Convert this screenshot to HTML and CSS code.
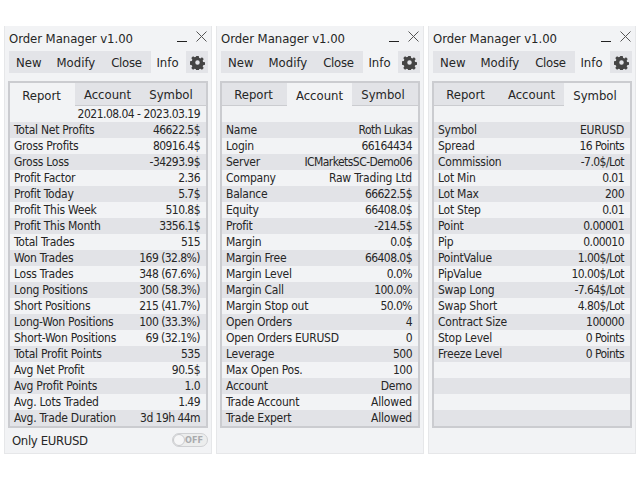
FILE: index.html
```html
<!DOCTYPE html>
<html lang="en">
<head>
<meta charset="utf-8">
<title>Order Manager</title>
<link rel="stylesheet" href="styles.css">
</head>
<body>
<main class="desk">

<section class="panel">
  <header class="title"><span>Order Manager v1.00</span><span class="min"></span><svg class="x" width="11" height="11" viewBox="0 0 11 11"><path d="M.5.5L10.5 10.5M10.5.5L.5 10.5"/></svg></header>
  <nav class="toolbar">
    <div class="btns"><span class="b1">New</span><span class="b2">Modify</span><span class="b3">Close</span></div>
    <span class="info">Info</span>
    <span class="gear"><svg width="15" height="15" viewBox="0 0 16 16"><path fill-rule="evenodd" d="M6.7 1h2.6l.4 2 1.3.6 1.8-1.1 1.8 1.8-1.1 1.8.6 1.3 2 .4v2.6l-2 .4-.6 1.3 1.1 1.8-1.8 1.8-1.8-1.1-1.3.6-.4 2H6.7l-.4-2-1.3-.6-1.8 1.1-1.8-1.8 1.1-1.8-.6-1.3-2-.4V6.7l2-.4.6-1.3-1.1-1.8 1.8-1.8 1.8 1.1 1.3-.6zM8 5.6a2.4 2.4 0 1 0 0 4.8 2.4 2.4 0 0 0 0-4.8z"/></svg></span>
  </nav>
  <div class="box">
    <div class="tabs"><span class="tab on t1">Report</span><span class="tab t2">Account</span><span class="tab t3">Symbol</span></div>
    <div class="date">2021.08.04 - 2023.03.19</div>
    <div class="rows">
      <div class="row"><span>Total Net Profits</span><span>46622.5$</span></div>
      <div class="row"><span>Gross Profits</span><span>80916.4$</span></div>
      <div class="row"><span>Gross Loss</span><span>-34293.9$</span></div>
      <div class="row"><span>Profit Factor</span><span>2.36</span></div>
      <div class="row"><span>Profit Today</span><span>5.7$</span></div>
      <div class="row"><span>Profit This Week</span><span>510.8$</span></div>
      <div class="row"><span>Profit This Month</span><span>3356.1$</span></div>
      <div class="row"><span>Total Trades</span><span>515</span></div>
      <div class="row"><span>Won Trades</span><span>169 (32.8%)</span></div>
      <div class="row"><span>Loss Trades</span><span>348 (67.6%)</span></div>
      <div class="row"><span>Long Positions</span><span>300 (58.3%)</span></div>
      <div class="row"><span>Short Positions</span><span>215 (41.7%)</span></div>
      <div class="row"><span>Long-Won Positions</span><span>100 (33.3%)</span></div>
      <div class="row"><span>Short-Won Positions</span><span>69 (32.1%)</span></div>
      <div class="row"><span>Total Profit Points</span><span>535</span></div>
      <div class="row"><span>Avg Net Profit</span><span>90.5$</span></div>
      <div class="row"><span>Avg Profit Points</span><span>1.0</span></div>
      <div class="row"><span>Avg. Lots Traded</span><span>1.49</span></div>
      <div class="row"><span>Avg. Trade Duration</span><span>3d 19h 44m</span></div>
    </div>
  </div>
  <footer class="foot"><span>Only EURUSD</span><span class="toggle"><i class="knob"></i><b class="off">OFF</b></span></footer>
</section>

<section class="panel">
  <header class="title"><span>Order Manager v1.00</span><span class="min"></span><svg class="x" width="11" height="11" viewBox="0 0 11 11"><path d="M.5.5L10.5 10.5M10.5.5L.5 10.5"/></svg></header>
  <nav class="toolbar">
    <div class="btns"><span class="b1">New</span><span class="b2">Modify</span><span class="b3">Close</span></div>
    <span class="info">Info</span>
    <span class="gear"><svg width="15" height="15" viewBox="0 0 16 16"><path fill-rule="evenodd" d="M6.7 1h2.6l.4 2 1.3.6 1.8-1.1 1.8 1.8-1.1 1.8.6 1.3 2 .4v2.6l-2 .4-.6 1.3 1.1 1.8-1.8 1.8-1.8-1.1-1.3.6-.4 2H6.7l-.4-2-1.3-.6-1.8 1.1-1.8-1.8 1.1-1.8-.6-1.3-2-.4V6.7l2-.4.6-1.3-1.1-1.8 1.8-1.8 1.8 1.1 1.3-.6zM8 5.6a2.4 2.4 0 1 0 0 4.8 2.4 2.4 0 0 0 0-4.8z"/></svg></span>
  </nav>
  <div class="box">
    <div class="tabs"><span class="tab t1">Report</span><span class="tab on t2">Account</span><span class="tab t3">Symbol</span></div>
    <div class="date"></div>
    <div class="rows">
      <div class="row"><span>Name</span><span>Roth Lukas</span></div>
      <div class="row"><span>Login</span><span>66164434</span></div>
      <div class="row"><span>Server</span><span>ICMarketsSC-Demo06</span></div>
      <div class="row"><span>Company</span><span class="word">Raw Trading Ltd</span></div>
      <div class="row"><span>Balance</span><span>66622.5$</span></div>
      <div class="row"><span>Equity</span><span>66408.0$</span></div>
      <div class="row"><span>Profit</span><span>-214.5$</span></div>
      <div class="row"><span>Margin</span><span>0.0$</span></div>
      <div class="row"><span>Margin Free</span><span>66408.0$</span></div>
      <div class="row"><span>Margin Level</span><span>0.0%</span></div>
      <div class="row"><span>Margin Call</span><span>100.0%</span></div>
      <div class="row"><span>Margin Stop out</span><span>50.0%</span></div>
      <div class="row"><span>Open Orders</span><span>4</span></div>
      <div class="row"><span>Open Orders EURUSD</span><span>0</span></div>
      <div class="row"><span>Leverage</span><span>500</span></div>
      <div class="row"><span>Max Open Pos.</span><span>100</span></div>
      <div class="row"><span>Account</span><span class="word">Demo</span></div>
      <div class="row"><span>Trade Account</span><span class="word">Allowed</span></div>
      <div class="row"><span>Trade Expert</span><span class="word">Allowed</span></div>
    </div>
  </div>
</section>

<section class="panel">
  <header class="title"><span>Order Manager v1.00</span><span class="min"></span><svg class="x" width="11" height="11" viewBox="0 0 11 11"><path d="M.5.5L10.5 10.5M10.5.5L.5 10.5"/></svg></header>
  <nav class="toolbar">
    <div class="btns"><span class="b1">New</span><span class="b2">Modify</span><span class="b3">Close</span></div>
    <span class="info">Info</span>
    <span class="gear"><svg width="15" height="15" viewBox="0 0 16 16"><path fill-rule="evenodd" d="M6.7 1h2.6l.4 2 1.3.6 1.8-1.1 1.8 1.8-1.1 1.8.6 1.3 2 .4v2.6l-2 .4-.6 1.3 1.1 1.8-1.8 1.8-1.8-1.1-1.3.6-.4 2H6.7l-.4-2-1.3-.6-1.8 1.1-1.8-1.8 1.1-1.8-.6-1.3-2-.4V6.7l2-.4.6-1.3-1.1-1.8 1.8-1.8 1.8 1.1 1.3-.6zM8 5.6a2.4 2.4 0 1 0 0 4.8 2.4 2.4 0 0 0 0-4.8z"/></svg></span>
  </nav>
  <div class="box">
    <div class="tabs"><span class="tab t1">Report</span><span class="tab t2">Account</span><span class="tab on t3">Symbol</span></div>
    <div class="date"></div>
    <div class="rows">
      <div class="row"><span>Symbol</span><span class="word">EURUSD</span></div>
      <div class="row"><span>Spread</span><span>16 Points</span></div>
      <div class="row"><span>Commission</span><span>-7.0$/Lot</span></div>
      <div class="row"><span>Lot Min</span><span>0.01</span></div>
      <div class="row"><span>Lot Max</span><span>200</span></div>
      <div class="row"><span>Lot Step</span><span>0.01</span></div>
      <div class="row"><span>Point</span><span>0.00001</span></div>
      <div class="row"><span>Pip</span><span>0.00010</span></div>
      <div class="row"><span>PointValue</span><span>1.00$/Lot</span></div>
      <div class="row"><span>PipValue</span><span>10.00$/Lot</span></div>
      <div class="row"><span>Swap Long</span><span>-7.64$/Lot</span></div>
      <div class="row"><span>Swap Short</span><span>4.80$/Lot</span></div>
      <div class="row"><span>Contract Size</span><span>100000</span></div>
      <div class="row"><span>Stop Level</span><span>0 Points</span></div>
      <div class="row"><span>Freeze Level</span><span>0 Points</span></div>
      <div class="row"></div>
      <div class="row"></div>
      <div class="row"></div>
      <div class="row"></div>
    </div>
  </div>
</section>

</main>
</body>
</html>
```

FILE: styles.css
```css
* { box-sizing: border-box; }
html, body { margin: 0; background: #fff; }
body { width: 640px; height: 480px; overflow: hidden; font-family: "DejaVu Sans", Tahoma, sans-serif; font-stretch: condensed; font-size: 12px; color: #262626; }
.desk { display: flex; gap: 4px; padding: 26px 4px 0; align-items: flex-start; }
.panel { width: 208px; height: 428px; background: #f2f3f5; border: 1px solid #e6e7e9; border-top: 0; padding: 0 3px 0 3px; display: flex; flex-direction: column; }
.title { height: 25px; display: flex; align-items: center; padding: 0 0 0 1px; font-size: 13px; letter-spacing: -0.05px; }
.title > span:first-child { flex: 1; }
.min { width: 10px; height: 1px; background: #222; margin: 5px 9px 0 0; }
.x { margin: -5px 1px 0 0; }
.x path { stroke: #555; stroke-width: 1; fill: none; }
.toolbar { height: 22px; display: flex; align-items: center; margin-left: 1px; font-size: 13px; }
.btns { width: 142px; height: 22px; background: #e3e4e8; display: flex; align-items: center; }
.b1 { margin-left: 7px; }
.b2 { margin-left: 15px; }
.b3 { margin-left: 16px; letter-spacing: -0.3px; }
.info { width: 35px; text-align: center; padding-right: 2px; }
.gear { width: 22px; height: 22px; background: #e3e4e8; display: flex; align-items: center; justify-content: center; }
.gear svg { fill: #444; }
.box { margin-top: 8px; width: 200px; border: 2px solid #cbccd0; height: 347px; background: #f2f3f5; }
.tabs { display: flex; height: 23px; font-size: 13px; }
.tab { background: #e2e3e7; border-bottom: 1px solid #cbccd0; height: 23px; text-align: center; line-height: 24px; }
.tab.on { background: #f2f3f5; border-bottom: 0; line-height: 26px; }
.t1, .t2 { width: 65px; }
.t1 { padding-right: 2px; }
.t3 { flex: 1; padding-right: 4px; }
.date { height: 16px; line-height: 16px; text-align: right; padding-right: 6px; letter-spacing: -0.52px; }
.row { height: 16px; line-height: 16px; display: flex; justify-content: space-between; padding: 0 6px 0 4px; letter-spacing: -0.25px; }
.row span:last-child { letter-spacing: -0.55px; }
.row span.word { letter-spacing: -0.2px; }
.row:nth-child(odd) { background: #e2e3e7; }
.foot { flex: 1; display: flex; align-items: center; justify-content: space-between; padding: 0 0 0 4px; font-size: 13px; letter-spacing: -0.35px; }
.toggle { width: 36px; height: 14px; border: 1px solid #cfd0d3; border-radius: 7px; background: #eceded; position: relative; font-size: 9px; color: #a9aaad; text-align: right; line-height: 12px; padding-right: 4px; margin-top: -1px; letter-spacing: 0; }
.knob { position: absolute; left: 0; top: 0; width: 12px; height: 12px; border: 1px solid #c9cacd; border-radius: 50%; background: #f6f6f7; }
.off { font-weight: bold; }
```
